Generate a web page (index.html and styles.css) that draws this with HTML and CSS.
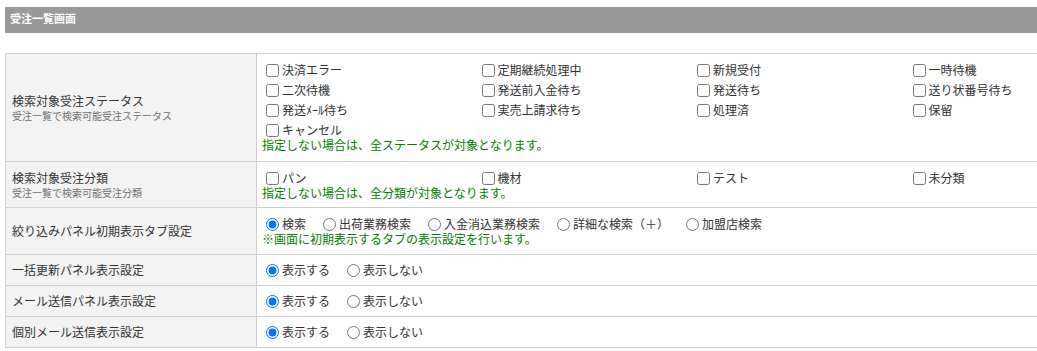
FILE: index.html
```html
<!DOCTYPE html>
<html lang="ja">
<head>
  <meta charset="UTF-8" />
  <title>受注一覧画面</title>
  <link rel="stylesheet" href="styles.css">
</head>
<body>
  <div class="pagina">
    <h3 class="titulo">受注一覧画面</h3>

    <table class="ajustes">
      <tr>
        <th>
          検索対象受注ステータス
          <span class="sub">受注一覧で検索可能受注ステータス</span>
        </th>
        <td class="con-nota primera">
          <div class="lista">
            <label><input type="checkbox">決済エラー</label>
            <label><input type="checkbox">定期継続処理中</label>
            <label><input type="checkbox">新規受付</label>
            <label><input type="checkbox">一時待機</label>
            <label><input type="checkbox">二次待機</label>
            <label><input type="checkbox">発送前入金待ち</label>
            <label><input type="checkbox">発送待ち</label>
            <label><input type="checkbox">送り状番号待ち</label>
            <label><input type="checkbox">発送ﾒｰﾙ待ち</label>
            <label><input type="checkbox">実売上請求待ち</label>
            <label><input type="checkbox">処理済</label>
            <label><input type="checkbox">保留</label>
            <label><input type="checkbox">キャンセル</label>
          </div>
          <div class="nota">指定しない場合は、全ステータスが対象となります。</div>
        </td>
      </tr>
      <tr>
        <th>
          検索対象受注分類
          <span class="sub">受注一覧で検索可能受注分類</span>
        </th>
        <td class="con-nota">
          <div class="lista">
            <label><input type="checkbox">パン</label>
            <label><input type="checkbox">機材</label>
            <label><input type="checkbox">テスト</label>
            <label><input type="checkbox">未分類</label>
          </div>
          <div class="nota">指定しない場合は、全分類が対象となります。</div>
        </td>
      </tr>
      <tr>
        <th>絞り込みパネル初期表示タブ設定</th>
        <td class="con-nota tercera">
          <div class="radios">
            <label><input type="radio" name="tab" checked>検索</label>
            <label><input type="radio" name="tab">出荷業務検索</label>
            <label><input type="radio" name="tab">入金消込業務検索</label>
            <label><input type="radio" name="tab">詳細な検索（＋）</label>
            <label><input type="radio" name="tab">加盟店検索</label>
          </div>
          <div class="nota">※画面に初期表示するタブの表示設定を行います。</div>
        </td>
      </tr>
      <tr>
        <th>一括更新パネル表示設定</th>
        <td>
          <div class="radios">
            <label><input type="radio" name="p1" checked>表示する</label>
            <label><input type="radio" name="p1">表示しない</label>
          </div>
        </td>
      </tr>
      <tr>
        <th>メール送信パネル表示設定</th>
        <td>
          <div class="radios">
            <label><input type="radio" name="p2" checked>表示する</label>
            <label><input type="radio" name="p2">表示しない</label>
          </div>
        </td>
      </tr>
      <tr>
        <th>個別メール送信表示設定</th>
        <td>
          <div class="radios">
            <label><input type="radio" name="p3" checked>表示する</label>
            <label><input type="radio" name="p3">表示しない</label>
          </div>
        </td>
      </tr>
    </table>
  </div>
</body>
</html>
```

FILE: styles.css
```css
html, body {
  margin: 0;
  padding: 0;
  overflow: hidden;
}

body {
  font-family: 'Noto Sans CJK JP', 'Noto Sans', sans-serif;
  font-size: 12px;
  color: #333;
  background: #fff;
}

.pagina {
  width: 1125px;
  padding: 7px 0 0 5px;
}

.titulo {
  margin: 0 0 20px;
  height: 26px;
  padding: 0 0 0 5px;
  box-sizing: border-box;
  background: #999;
  color: #fff;
  font-size: 11px;
  font-weight: 700;
  line-height: 22px;
}

.ajustes {
  width: 1125px;
  border-collapse: collapse;
}

.ajustes th,
.ajustes td {
  border: 1px solid #d0d0d0;
  vertical-align: middle;
}

.ajustes th {
  width: 239px;
  padding: 0 5px 0 6px;
  background: #f2f3f2;
  text-align: left;
  font-weight: 400;
  line-height: 16px;
}

.sub {
  display: block;
  font-size: 10px;
  color: #707070;
  line-height: 14px;
}

.ajustes td {
  padding: 5px;
  line-height: 20px;
}

.ajustes td.con-nota {
  padding: 6px 5px;
}

.ajustes td.primera {
  padding-bottom: 8px;
}

.ajustes td.tercera {
  padding-bottom: 7px;
}

.lista {
  display: flex;
  flex-wrap: wrap;
}

.lista label {
  width: 25%;
  height: 20px;
  display: flex;
  align-items: center;
}

.radios {
  display: flex;
  align-items: center;
  height: 20px;
}

.radios label {
  display: flex;
  align-items: center;
  margin-right: 13px;
}

input[type="checkbox"] {
  width: 13px;
  height: 13px;
  margin: 0 3px 0 4px;
}

input[type="radio"] {
  width: 13px;
  height: 13px;
  margin: 0 3px 0 4px;
}

.nota {
  color: #008000;
  line-height: 16px;
  margin-top: -3px;
}
```
